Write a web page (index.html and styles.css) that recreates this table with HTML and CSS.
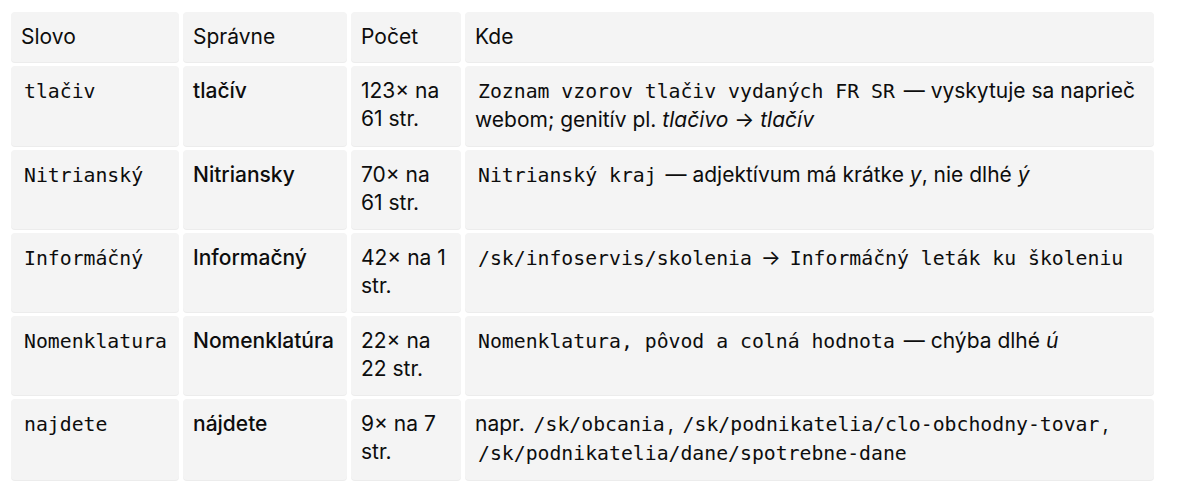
FILE: index.html
```html
<!DOCTYPE html>
<html lang="sk">
<head>
<meta charset="utf-8">
<title>Tabuľka chýb</title>
<link rel="stylesheet" href="styles.css">
</head>
<body>
<table class="tbl">
  <colgroup>
    <col class="c1"><col class="c2"><col class="c3"><col class="c4">
  </colgroup>
  <thead>
    <tr><th>Slovo</th><th>Správne</th><th>Počet</th><th>Kde</th></tr>
  </thead>
  <tbody>
    <tr>
      <td><code>tlačiv</code></td>
      <td class="ok">tlačív</td>
      <td>123× na 61 str.</td>
      <td><code>Zoznam vzorov tlačiv vydaných FR SR</code> — vyskytuje sa naprieč webom; genitív pl. <em>tlačivo</em> → <em>tlačív</em></td>
    </tr>
    <tr>
      <td><code>Nitrianský</code></td>
      <td class="ok">Nitriansky</td>
      <td>70× na 61 str.</td>
      <td><code>Nitrianský kraj</code> — adjektívum má krátke <em>y</em>, nie dlhé <em>ý</em></td>
    </tr>
    <tr>
      <td><code>Informáčný</code></td>
      <td class="ok">Informačný</td>
      <td>42× na 1 str.</td>
      <td><code>/sk/infoservis/skolenia</code> → <code>Informáčný leták ku školeniu</code></td>
    </tr>
    <tr>
      <td><code>Nomenklatura</code></td>
      <td class="ok">Nomenklatúra</td>
      <td>22× na 22 str.</td>
      <td><code>Nomenklatura, pôvod a colná hodnota</code> — chýba dlhé <em>ú</em></td>
    </tr>
    <tr>
      <td><code>najdete</code></td>
      <td class="ok">nájdete</td>
      <td>9× na 7 str.</td>
      <td>napr. <code>/sk/obcania</code>, <code>/sk/podnikatelia/clo-obchodny-tovar</code>, <code>/sk/podnikatelia/dane/spotrebne-dane</code></td>
    </tr>
  </tbody>
</table>
</body>
</html>
```
FILE: styles.css
```css
html, body {
  margin: 0;
  background: #ffffff;
}
body {
  padding: 8px 7px;
  font-family: Inter, "Liberation Sans", sans-serif;
  font-size: 21px;
  line-height: 28px;
  color: #0d0d0d;
}
.tbl {
  border-collapse: separate;
  border-spacing: 4px;
  table-layout: fixed;
  width: 1151px;
}
.c1 { width: 168px; }
.c2 { width: 164px; }
.c3 { width: 110px; }
.c4 { width: 689px; }
.tbl th,
.tbl td {
  background: #f4f4f4;
  border-radius: 4px;
  padding: 11px 10px;
  text-align: left;
  vertical-align: top;
  font-weight: 400;
  box-shadow: 0 1px 0 #ececec;
}
.tbl td {
  padding-bottom: 12px;
}
.tbl td.ok {
  font-weight: 500;
}
code {
  font-family: "DejaVu Sans Mono", "Liberation Mono", monospace;
  font-size: 19.8px;
  line-height: 28px;
  padding: 0 3px;
}
em {
  font-style: italic;
}
```
